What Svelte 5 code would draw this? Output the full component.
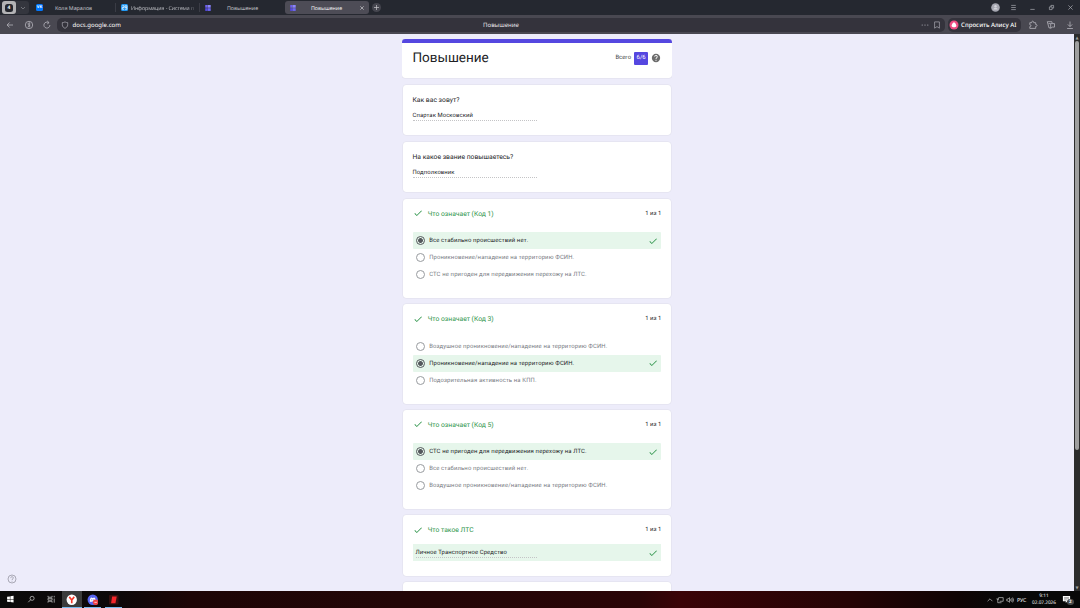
<script lang="ts">
  interface Question {
    title: string;
    answer: number;
    options: string[];
  }

  const questions: Question[] = [
    {
      title: 'Что означает (Код 1)',
      answer: 0,
      options: [
        'Все стабильно происшествий нет.',
        'Проникновение/нападение на территорию ФСИН.',
        'СТС не пригоден для передвижения перехожу на ЛТС.',
      ],
    },
    {
      title: 'Что означает (Код 3)',
      answer: 1,
      options: [
        'Воздушное проникновение/нападение на территорию ФСИН.',
        'Проникновение/нападение на территорию ФСИН.',
        'Подозрительная активность на КПП.',
      ],
    },
    {
      title: 'Что означает (Код 5)',
      answer: 0,
      options: [
        'СТС не пригоден для передвижения перехожу на ЛТС.',
        'Все стабильно происшествий нет.',
        'Воздушное проникновение/нападение на территорию ФСИН.',
      ],
    },
  ];

  const fields = [
    { label: 'Как вас зовут?', value: 'Спартак Московский' },
    { label: 'На какое звание повышаетесь?', value: 'Подполковник' },
  ];
</script>

{#snippet check()}
  <svg class="check" viewBox="0 0 24 24"><path d="M9 16.2 4.8 12l-1.4 1.4L9 19 21 7l-1.4-1.4z" /></svg>
{/snippet}

{#snippet formIcon()}
  <svg class="form-icon" viewBox="0 0 12 12">
    <rect x="0.5" y="0" width="4" height="5.4" fill="#6d60f0" />
    <rect x="4.9" y="0" width="6.5" height="5.4" fill="#8a84fb" />
    <rect x="0.5" y="6.4" width="4" height="5.4" fill="#5549e8" />
    <rect x="4.9" y="6.4" width="6.5" height="5.4" fill="#6f67f7" />
  </svg>
{/snippet}

{#snippet heading(title: string)}
  <div class="heading">
    {@render check()}
    <h2>{title}</h2>
    <span class="points">1 из 1</span>
  </div>
{/snippet}

<div class="screen">
  <header class="tabs">
    <div class="group">
      <span class="group__box"><b>4</b></span>
      <svg class="group__arrow" viewBox="0 0 8 8"><path d="m2 3 2 2 2-2" /></svg>
    </div>
    <div class="tab tab--vk">
      <span class="favicon favicon--vk">VK</span>
      <span class="tab__title">Коля Маралов</span>
    </div>
    <div class="tab tab--info">
      <span class="favicon favicon--info">
        <svg viewBox="0 0 8 8"><path d="M1.5 2h2v2h-2v2h2M4.7 2h2v2h-2zM4.7 6h2V4" /></svg>
      </span>
      <span class="tab__title tab__title--long">Информация - Система п</span>
    </div>
    <div class="tab tab--form">
      {@render formIcon()}
      <span class="tab__title">Повышение</span>
    </div>
    <div class="tab tab--active">
      {@render formIcon()}
      <span class="tab__title">Повышение</span>
      <svg class="tab__close" viewBox="0 0 6 6"><path d="m1.3 1.3 3.4 3.4M4.7 1.3 1.3 4.7" /></svg>
    </div>
    <span class="new-tab"><svg viewBox="0 0 9 9"><path d="M4.5 2v5M2 4.5h5" /></svg></span>
    <div class="window">
      <svg class="avatar" viewBox="0 0 9 9"><circle cx="4.5" cy="4.5" r="4.3" fill="#a6a7b1" stroke="none" /><circle cx="4.5" cy="3.2" r="1.2" fill="#d3d4da" stroke="none" /><path d="M2.3 6.6c.3-2.4 4.1-2.4 4.4 0z" fill="#d3d4da" stroke="none" /></svg>
      <svg viewBox="0 0 9 9"><path d="M2.2 2.4h4.6M2.2 4.5h4.6M2.2 6.6h4.6" /></svg>
      <svg viewBox="0 0 9 9"><path d="M2.3 6.4h4.4" /></svg>
      <svg viewBox="0 0 9 9"><path d="M3.9 3.9V2.4h2.7v2.7H5.2M2.4 3.9h2.7v2.7H2.4z" /></svg>
      <svg viewBox="0 0 9 9"><path d="m2.4 2.4 4.2 4.2M6.6 2.4 2.4 6.6" /></svg>
    </div>
  </header>

  <div class="toolbar">
    <div class="nav">
      <svg viewBox="0 0 10 10"><path d="M8 5H2.2M4.6 2.5 2.1 5l2.5 2.5" /></svg>
      <svg viewBox="0 0 10 10"><circle cx="5" cy="5" r="3.7" /><path d="M5.7 7.4V2.7c-2-.2-2.2 2.3-.5 2.6h.5M5 5.3 4 7.4" /></svg>
      <svg viewBox="0 0 10 10"><path d="M7.9 5A3 3 0 1 1 6.6 2.6M5.3 1l1.8 1.7-1.9 1.2" /></svg>
    </div>
    <div class="address">
      <svg class="shield" viewBox="0 0 8 8"><path d="M4 .9c1 .6 1.8.7 2.7.7v2.2C6.7 5.5 5.5 6.7 4 7.3 2.5 6.7 1.3 5.5 1.3 3.8V1.6c.9 0 1.7-.1 2.7-.7z" /></svg>
      <span class="address__host">docs.google.com</span>
      <span class="address__title">Повышение</span>
      <svg class="dots" viewBox="0 0 8 8"><circle cx="1.2" cy="4" r=".6" /><circle cx="4" cy="4" r=".6" /><circle cx="6.8" cy="4" r=".6" /></svg>
      <svg class="bookmark" viewBox="0 0 8 8"><path d="M1.6.9h4.8v6.3L4 5.6 1.6 7.2z" /></svg>
    </div>
    <div class="alice">
      <svg viewBox="0 0 10 10"><circle cx="5" cy="5" r="4.5" fill="#f04c82" /><path d="M5 2.2c1 0 2.6 3 2.4 3.9C7.2 7 6 7.3 5 7.3S2.8 7 2.6 6.1C2.4 5.2 4 2.2 5 2.2z" fill="#fff" /></svg>
      <span>Спросить Алису AI</span>
    </div>
    <div class="actions">
      <svg viewBox="0 0 10 10"><path d="M1.8 2.7h1.9c-.4-2 2.4-2 2 0h2v1.8c1.8-.3 1.8 2.1 0 1.9v2H1.8V6.6c1.6.1 1.6-2 0-1.9z" /></svg>
      <svg viewBox="0 0 10 10"><path d="M4.5 7.9H3L1.3 1.7h4.5l.4 1.5M2.5 3.6h2M4.7 3.6h3.8v3.5H6.2L4.7 8.4z" /></svg>
      <svg viewBox="0 0 10 10"><path d="M5 1.5v4.9M2.8 4.4 5 6.6l2.2-2.2M2.1 8.5h5.8" /></svg>
    </div>
  </div>

  <div class="viewport">
    <main class="form">
      <section class="card card--head">
        <h1>Повышение</h1>
        <span class="total">Всего</span>
        <span class="score">6/6</span>
        <svg class="help" viewBox="0 0 24 24"><path d="M12 2a10 10 0 1 0 0 20 10 10 0 0 0 0-20zm1 17h-2v-2h2zm2.07-7.75-.9.92C13.45 12.9 13 13.5 13 15h-2v-.5c0-1.1.45-2.1 1.17-2.83l1.24-1.26A2 2 0 1 0 10 9H8a4 4 0 1 1 7.07 2.25z" /></svg>
      </section>

      {#each fields as field}
        <section class="card card--text">
          <p class="label">{field.label}</p>
          <p class="value">{field.value}</p>
        </section>
      {/each}

      {#each questions as question}
        <section class="card card--choice">
          {@render heading(question.title)}
          <div class="options">
            {#each question.options as option, i}
              <div class="option" class:option--picked={i === question.answer}>
                <span class="radio"></span>
                <span class="option__text">{option}</span>
                {#if i === question.answer}
                  {@render check()}
                {/if}
              </div>
            {/each}
          </div>
        </section>
      {/each}

      <section class="card card--short">
        {@render heading('Что такое ЛТС')}
        <div class="reply">
          <p class="value">Личное Транспортное Средство</p>
          {@render check()}
        </div>
      </section>

      <section class="card card--next"></section>
    </main>

    <svg class="feedback" viewBox="0 0 10 10"><circle cx="5" cy="5" r="4" /><path d="M3.7 4.1C3.7 2.2 6.4 2.3 6.3 4c0 .9-1.3 1-1.3 2M5 6.8v.8" /></svg>

    <div class="scrollbar">
      <span class="scrollbar__arrow">▲</span>
      <span class="scrollbar__thumb"></span>
      <span class="scrollbar__arrow">▼</span>
    </div>
  </div>

  <footer class="taskbar">
    <span class="task"><svg viewBox="0 0 10 10"><path d="M1.3 2.2 4.6 1.7v3H1.3zM5.1 1.6 8.9 1v3.7H5.1zM1.3 5.2h3.3v3L1.3 7.8zM5.1 5.2h3.8v3.7l-3.8-.6z" fill="#fff" /></svg></span>
    <span class="task"><svg class="line" viewBox="0 0 10 10"><circle cx="6" cy="3.9" r="2.4" /><path d="M4.2 5.7 1.5 8.5" /></svg></span>
    <span class="task"><svg class="line" viewBox="0 0 10 10"><path d="M1.2 1v1.6H6V1M1.2 9V7.4H6V9M1.2 3.9H6v2.2H1.2zM8.5 1v1.8M8.5 4.2V9" /></svg></span>
    <span class="task task--active"><svg class="big" viewBox="0 0 12 12"><circle cx="6" cy="6" r="5.4" fill="#fff" /><path d="M3.4 3 6 6.2v3.4M8.6 3 6 6.2" fill="none" stroke="#f5392b" stroke-width="1.7" /></svg></span>
    <span class="task task--open"><svg class="big" viewBox="0 0 12 12"><circle cx="6" cy="6" r="5.4" fill="#5865f2" /><path d="M2.9 7.9C2.9 5.5 3.5 4.4 4 3.9l1.1-.3.3.5h1.3l.3-.5 1.1.3c.6.8 1.1 2.2 1.1 3.8-1.3 1-1.5.8-2 0H4.9c-.5.9-.9.9-2 .2z" fill="#fff" /><circle cx="5" cy="6" r=".6" fill="#5865f2" /><circle cx="7.1" cy="6" r=".6" fill="#5865f2" /><circle cx="9" cy="8.7" r="2.9" fill="#ed4245" /><path d="M7.7 8.7h2.6" stroke="#ffd9da" stroke-width=".9" /></svg></span>
    <span class="task task--open"><svg class="big" viewBox="0 0 12 12"><rect x="1" y="1" width="10" height="10" rx="1" fill="#35100f" /><path d="M4.3 2.5h4.8L7.8 9.6H3.2z" fill="#f4262b" /></svg></span>

    <div class="tray">
      <svg viewBox="0 0 10 10"><path d="M2 6.5 5 3.5l3 3" /></svg>
      <svg viewBox="0 0 10 10"><path d="M3 2h6v4.6H4.5M1.4 2.5v2h1.7v-2M2.2 4.5v3.9h4.7" /></svg>
      <svg viewBox="0 0 10 10"><path d="M1 3.8h1.5l1.9-1.7v5.8L2.5 6.2H1zM5.7 3.6q1 1.4 0 2.8M7 2.7q1.7 2.3 0 4.6M8.3 1.9q2.3 3.1 0 6.2" /></svg>
      <span class="lang">РУС</span>
      <span class="clock"><span>9:11</span><span>02.07.2026</span></span>
      <span class="notes">
        <svg viewBox="0 0 10 10"><path d="M1 1h8v6H6L4.2 8.8V7H1z" fill="#fff" stroke="none" /><path d="M2.3 2.7h5.4M2.3 4.1h5.4M2.3 5.5h3" stroke="#444" stroke-width=".5" /></svg>
        <b>2</b>
      </span>
    </div>
  </footer>
</div>

<style>
  :global(body) {
    margin: 0;
    overflow: hidden;
  }

  .screen {
    display: flex;
    flex-direction: column;
    width: 1080px;
    height: 608px;
    overflow: hidden;
    font-family: Roboto, Inter, "Liberation Sans", sans-serif;
    text-rendering: geometricPrecision;
  }

  .screen * {
    box-sizing: border-box;
  }

  svg {
    display: block;
    flex: none;
  }

  h1,
  h2,
  p {
    margin: 0;
    font-weight: 400;
  }

  /* Browser tabs */
  .tabs {
    display: flex;
    align-items: center;
    height: 15px;
    flex: none;
    background: #252830;
    color: #c3c4ca;
    font-family: "Noto Sans", sans-serif;
    font-size: 5.3px;
  }

  .group {
    display: flex;
    align-items: center;
    width: 27px;
    height: 13px;
    margin-left: 2px;
    border-radius: 3px;
    background: #34363e;
  }

  .group__box {
    display: grid;
    place-items: center;
    width: 14px;
    height: 13px;
    border-radius: 3px;
    background: #b3b3b5;
  }

  .group__box b {
    width: 8px;
    height: 8px;
    border-radius: 2.5px;
    background: #24262d;
    color: #fff;
    font-size: 5px;
    line-height: 8px;
    text-align: center;
  }

  .group__arrow {
    width: 8px;
    margin-left: 3px;
    fill: none;
    stroke: #8b8c93;
    stroke-width: 0.7;
  }

  .tab {
    display: flex;
    align-items: center;
    height: 13px;
    flex: none;
  }

  .tab__title {
    flex: 1;
    text-align: center;
    white-space: nowrap;
  }

  .tab--vk {
    width: 87px;
    height: 9px;
    padding: 0 11px 0 7px;
    border-right: 1px solid #3a3c45;
  }

  .tab--info {
    width: 84px;
    height: 9px;
    padding-left: 4.5px;
    border-right: 1px solid #3a3c45;
  }

  .tab__title--long {
    padding-left: 3.5px;
    background: linear-gradient(90deg, #c3c4ca 82%, #44464f 96%);
    background-clip: text;
    color: transparent;
    letter-spacing: -0.08px;
    text-align: left;
  }

  .tab--form {
    width: 84px;
    padding: 0 10px 0 5px;
  }

  .tab--active {
    width: 84.5px;
    margin-left: 0.5px;
    padding: 0 4px 0 5px;
    border-radius: 3px;
    background: #4d4c56;
    color: #f0f0f3;
  }

  .tab--active .tab__title {
    padding-right: 1.5px;
  }

  .tab__close {
    width: 6px;
    stroke: #c8c8cd;
    stroke-width: 0.7;
  }

  .favicon {
    display: grid;
    place-items: center;
    flex: none;
    width: 7px;
    height: 7px;
    border-radius: 1.5px;
    color: #fff;
    font-size: 4px;
    font-weight: 700;
    line-height: 7px;
  }

  .favicon--vk {
    background: #0077ff;
  }

  .favicon--info {
    background: #2197f3;
  }

  .favicon--info svg {
    width: 7px;
    fill: none;
    stroke: #fff;
    stroke-width: 0.8;
  }

  .form-icon {
    width: 6px;
    height: 6px;
  }

  .new-tab {
    display: grid;
    place-items: center;
    width: 9px;
    height: 9px;
    margin-left: 3px;
    border-radius: 50%;
    background: #45464f;
  }

  .new-tab svg {
    width: 9px;
    stroke: #c8c8cd;
    stroke-width: 0.7;
  }

  .window {
    display: flex;
    align-items: center;
    gap: 9.7px;
    margin: 0 5.5px 0 auto;
  }

  .window svg {
    width: 9px;
    fill: none;
    stroke: #a9aab1;
    stroke-width: 0.7;
  }

  /* Address bar */
  .toolbar {
    display: flex;
    align-items: center;
    height: 19px;
    flex: none;
    background: #494851;
    color: #fff;
    font-family: "Noto Sans", sans-serif;
  }

  .nav {
    display: flex;
    gap: 8.7px;
    width: 57px;
    padding-left: 5px;
  }

  .nav svg,
  .actions svg {
    width: 10px;
    fill: none;
    stroke: #bbbac1;
    stroke-width: 0.75;
  }

  .address {
    display: flex;
    align-items: center;
    width: 888px;
    height: 14px;
    padding: 0 4px;
    border-radius: 5px;
    background: #34333c;
  }

  .address svg {
    width: 8px;
    fill: none;
    stroke: #b5b4bc;
    stroke-width: 0.65;
  }

  .address__host {
    width: 352px;
    margin-left: 3.5px;
    font-size: 6.05px;
  }

  .address__title {
    width: 80px;
    margin-left: 36.5px;
    text-align: center;
    font-size: 6.1px;
    color: #e4e4e8;
  }

  .address .dots {
    margin-left: auto;
    fill: #b5b4bc;
    stroke: none;
  }

  .bookmark {
    margin-left: 4px;
  }

  .alice {
    display: flex;
    align-items: center;
    width: 73px;
    height: 14px;
    margin-left: 3px;
    padding-left: 1px;
    border-radius: 5px;
    background: #34333c;
    font-size: 6.1px;
    font-weight: 500;
    white-space: nowrap;
  }

  .alice svg {
    width: 10px;
    margin-right: 2px;
  }

  .actions {
    display: flex;
    gap: 8.8px;
    margin-left: 6.5px;
  }

  /* Page */
  .viewport {
    position: relative;
    display: flex;
    flex: 1;
    min-height: 0;
    overflow: hidden;
    background: #edecfa;
  }

  .form {
    display: flex;
    flex-direction: column;
    gap: 6.2px;
    width: 270px;
    height: 557px;
    margin: 5px 0 0 402px;
    padding: 0 0.6px;
    overflow: hidden;
    color: #202124;
  }

  .card {
    flex: none;
    padding: 0 10.2px 0 9.95px;
    border-radius: 3.4px;
    background: #fff;
    box-shadow: 0 0 0 0.5px #dfdeea;
  }

  .card--head {
    display: flex;
    align-items: center;
    height: 39.4px;
    margin: 0 -0.5px;
    padding: 0 10.8px 5.8px 10.3px;
    border-top: 4px solid #5547e0;
  }

  h1 {
    flex: 1;
    font-size: 13.5px;
    line-height: 18px;
  }

  .total {
    font-size: 5.9px;
    color: #3c4043;
  }

  .score {
    width: 14px;
    height: 13px;
    margin: 1px 3px 0;
    border-radius: 1px;
    background: #5547e0;
    color: #fff;
    font-size: 5.9px;
    line-height: 13px;
    text-align: center;
  }

  .help {
    width: 10px;
    fill: #6d6d6d;
  }

  .card--text {
    height: 50.8px;
    padding-top: 10px;
  }

  .label {
    font-size: 6.75px;
    line-height: 10px;
  }

  .value {
    width: 124.5px;
    height: 10px;
    border-bottom: 1px dotted #c4c4c6;
    font-size: 5.9px;
    letter-spacing: 0.1px;
    line-height: 10px;
  }

  .card--text .value {
    margin-top: 6px;
  }

  .card--choice {
    height: 99.4px;
  }

  .card--short {
    height: 60.5px;
  }

  .card--next {
    height: 60px;
  }

  .heading {
    display: flex;
    align-items: center;
    height: 29px;
  }

  .check {
    width: 10.2px;
    height: 10.2px;
    fill: #2b9348;
  }

  h2 {
    flex: 1;
    margin-left: 5px;
    padding-top: 1px;
    color: #2b9348;
    font-size: 6.75px;
  }

  .points {
    padding-top: 1px;
    color: #202124;
    font-size: 5.9px;
  }

  .options {
    margin-top: 4.7px;
  }

  .option {
    display: flex;
    align-items: center;
    height: 16.9px;
    padding: 0 3px;
    border-radius: 1px;
    color: #777a7f;
    font-size: 5.9px;
    letter-spacing: 0.145px;
  }

  .option--picked {
    background: #e6f6eb;
    color: #202124;
  }

  .option__text {
    flex: 1;
    padding-top: 1px;
  }

  .radio {
    width: 9px;
    height: 9px;
    margin-right: 4.6px;
    border: 1px solid #989b9f;
    border-radius: 50%;
  }

  .option--picked .radio {
    border-color: #55595d;
    background: radial-gradient(circle, #55595d 2.1px, transparent 2.6px);
  }

  .reply {
    display: flex;
    align-items: center;
    justify-content: space-between;
    height: 17px;
    padding: 0 3px;
    background: #e6f6eb;
  }

  .reply .value {
    width: 121px;
    margin-top: -0.4px;
  }

  .feedback {
    position: absolute;
    left: 7px;
    bottom: 7px;
    width: 10px;
    fill: none;
    stroke: #8d8c98;
    stroke-width: 0.7;
  }

  .scrollbar {
    display: flex;
    flex-direction: column;
    width: 6px;
    margin-left: auto;
    background: #2c2c2c;
  }

  .scrollbar__arrow {
    height: 7px;
    color: #a0a0a0;
    font-family: "DejaVu Sans", sans-serif;
    font-size: 4px;
    line-height: 7px;
    text-align: center;
  }

  .scrollbar__thumb {
    width: 4px;
    height: 409px;
    margin: 0 auto auto;
    border-radius: 2px;
    background: #9f9f9f;
  }

  /* Taskbar */
  .taskbar {
    display: flex;
    height: 17px;
    flex: none;
    background: linear-gradient(90deg, #0b0b0b 0, #0d0809 120px, #1d0506 190px, #230607 400px, #2a0507 640px, #3a0307 680px, #250405 850px, #0f0404 960px, #080808 1000px);
    color: #fff;
  }

  .task {
    display: grid;
    place-items: center;
    width: 20.6px;
    height: 17px;
  }

  .task svg {
    width: 8.5px;
  }

  .task svg.line {
    fill: none;
    stroke: #d8d8d8;
    stroke-width: 0.8;
  }

  .task svg.big {
    width: 11.5px;
  }

  .task--active {
    background: #3b3b3b;
    box-shadow: inset 0 -1px #76b9ed;
  }

  .task--open {
    background: linear-gradient(#76b9ed, #76b9ed) center bottom / 17px 1px no-repeat;
  }

  .tray {
    display: flex;
    align-items: center;
    margin-left: auto;
    font-family: "Noto Sans", sans-serif;
    font-size: 5.2px;
  }

  .tray svg {
    width: 8px;
    margin-right: 2.1px;
    fill: none;
    stroke: #e0e0e0;
    stroke-width: 0.75;
  }

  .lang {
    width: 10px;
    margin-left: 0.5px;
  }

  .clock {
    display: flex;
    flex-direction: column;
    align-items: center;
    width: 26px;
    margin-left: 4px;
    padding-top: 1.5px;
    font-size: 4.7px;
    line-height: 7.4px;
  }

  .notes {
    position: relative;
    width: 23px;
    padding-left: 5px;
  }

  .notes svg {
    width: 9px;
  }

  .notes b {
    position: absolute;
    left: 10px;
    top: 3.5px;
    width: 6.5px;
    height: 6.5px;
    border-radius: 50%;
    background: #4b4b4b;
    font-size: 4.5px;
    line-height: 6.5px;
    text-align: center;
  }
</style>
